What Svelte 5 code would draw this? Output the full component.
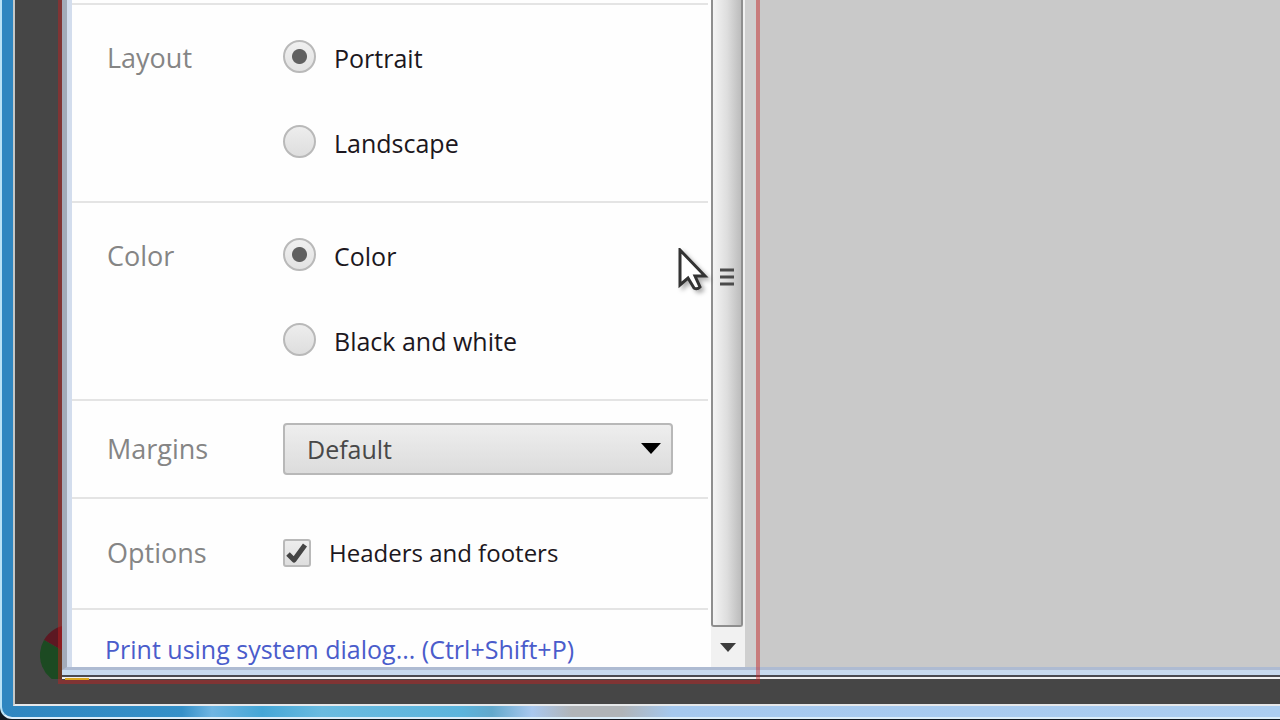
<script lang="ts">
  type Choice = { value: string; label: string };
  type Group = { name: string; title: string; choices: Choice[] };

  const groups: Group[] = [
    {
      name: "layout",
      title: "Layout",
      choices: [
        { value: "portrait", label: "Portrait" },
        { value: "landscape", label: "Landscape" },
      ],
    },
    {
      name: "color",
      title: "Color",
      choices: [
        { value: "color", label: "Color" },
        { value: "bw", label: "Black and white" },
      ],
    },
  ];

  let selected: Record<string, string> = $state({
    layout: "portrait",
    color: "color",
  });
  let margins = $state("default");
  let headers = $state(true);
</script>

<div class="desktop">
  <div class="window">
    <svg class="logo" viewBox="0 0 60 54" aria-hidden="true">
      <path d="M30 30 4 15A30 30 0 0 1 56 15Z" fill="#5c1822" />
      <path d="M30 30 4 15A30 30 0 0 0 22 59Z" fill="#1c4a22" />
    </svg>

    <div class="dialog">
      <div class="sidebar">
        <form class="settings">
          <div class="previous"></div>

          {#each groups as group (group.name)}
            <div class="row" role="radiogroup" aria-labelledby={group.name}>
              <span class="title" id={group.name}>{group.title}</span>
              <div class="choices">
                {#each group.choices as choice (choice.value)}
                  <label class="choice">
                    <input
                      type="radio"
                      name={group.name}
                      value={choice.value}
                      bind:group={selected[group.name]}
                    />
                    {choice.label}
                  </label>
                {/each}
              </div>
            </div>
          {/each}

          <div class="row margins">
            <label class="title" for="margins">Margins</label>
            <div class="dropdown">
              <select id="margins" bind:value={margins}>
                <option value="default">Default</option>
                <option value="none">None</option>
                <option value="minimum">Minimum</option>
              </select>
              <svg class="arrow" viewBox="0 0 20 11" aria-hidden="true">
                <path d="M0 0H20L10 11Z" />
              </svg>
            </div>
          </div>

          <div class="row options">
            <span class="title">Options</span>
            <label class="choice">
              <span class="check">
                <input type="checkbox" bind:checked={headers} />
                {#if headers}
                  <svg viewBox="0 0 28 28" aria-hidden="true">
                    <path d="M5 15 11 21 22 6" />
                  </svg>
                {/if}
              </span>
              Headers and footers
            </label>
          </div>

          <a class="system" href="#system">Print using system dialog... (Ctrl+Shift+P)</a>
        </form>

        <div class="scrollbar">
          <div class="thumb">
            <svg viewBox="0 0 14 18" aria-hidden="true">
              <path d="M0 2H14M0 9H14M0 16H14" />
            </svg>
          </div>
          <button type="button" aria-label="Scroll down">
            <svg viewBox="0 0 16 9" aria-hidden="true">
              <path d="M0 0H16L8 9Z" />
            </svg>
          </button>
        </div>

        <div class="highlight"></div>

        <svg class="cursor" viewBox="0 0 36 50" aria-hidden="true">
          <path d="M2 2V37L10 30L16 40Q19 42 22 39L17 28H27Z" />
        </svg>
      </div>
      <div class="preview"></div>
    </div>
  </div>
</div>

<style>
  :global(body) {
    margin: 0;
    background: #101820;
  }

  .desktop {
    box-sizing: border-box;
    display: flex;
    min-height: 100vh;
    padding-bottom: 2px;
    overflow: hidden;
    background: #101820;
    font-family: "Open Sans", "Noto Sans", sans-serif;
    font-size: 25px;
    line-height: 36px;
    color: #1c1720;
  }

  .window {
    position: relative;
    flex: 1;
    display: flex;
    padding: 0 0 11px 11px;
    border-left: 2px solid #b9e2f6;
    border-bottom: 2px solid #dceefa;
    border-bottom-left-radius: 12px;
    background:
      linear-gradient(
          90deg,
          #2f86c0 0,
          #3590c8 180px,
          #6fb5e2 210px,
          #45a6d6 260px,
          #6abbe0 320px,
          #5cb4dc 460px,
          #62a8cc 490px,
          #a9c8ee 530px,
          #b0b4b8 570px,
          #b0b4b8 620px,
          #a5c8ee 670px,
          #abcdf0 100%
        )
        bottom / 100% 11px no-repeat,
      #2f86c0;
  }

  .dialog {
    flex: 1;
    display: flex;
    padding-left: 47px;
    padding-bottom: 34px;
    border-left: 2px solid #c4c8c8;
    border-bottom: 2px solid #e6e8ea;
    background: #464646;
  }

  .logo {
    position: absolute;
    left: 38px;
    bottom: 38px;
    width: 60px;
    height: 54px;
  }

  .sidebar {
    position: relative;
    z-index: 1;
    display: flex;
    border-left: 5px solid #a3abb9;
    border-bottom: 3px solid #aebbd2;
    background: #cfcfcf;
    box-shadow:
      0 5px #c8daee,
      0 7px #4a4a50,
      0 9px #f0f0f0;
  }

  .settings {
    box-sizing: border-box;
    width: calc(50vw + 4px);
    border-left: 5px solid #d3dded;
    background: #fefefe;
  }

  .previous {
    height: 3px;
    margin-right: 3px;
    border-bottom: 2px solid #e4e4e4;
  }

  .row {
    display: flex;
    align-items: flex-start;
    margin-right: 3px;
    padding: 35px 35px 40px;
    border-bottom: 2px solid #e4e4e4;
  }

  .title {
    flex: none;
    width: 176px;
    font-size: 27px;
    color: #858585;
  }

  .choices {
    display: flex;
    flex-direction: column;
    gap: 49px;
  }

  .choice {
    display: flex;
    align-items: center;
    gap: 18px;
  }

  input {
    appearance: none;
    box-sizing: border-box;
    flex: none;
    margin: 0;
    border: 2px solid #b9b9b9;
    background: linear-gradient(#ededed, #dedede);
  }

  input[type="radio"] {
    width: 33px;
    height: 33px;
    margin-bottom: 3px;
    border-radius: 50%;
  }

  input[type="radio"]:checked {
    background:
      radial-gradient(circle, #606060 7px, transparent 8px),
      linear-gradient(#f0f0f0, #e2e2e2);
  }

  .margins {
    align-items: center;
    padding-top: 22px;
    padding-bottom: 22px;
  }

  .dropdown {
    position: relative;
    flex: 1;
  }

  select {
    appearance: none;
    display: block;
    width: 100%;
    height: 52px;
    padding: 0 22px;
    border: 2px solid #b8b8b8;
    border-radius: 4px;
    background: linear-gradient(#eeeeee, #dcdcdc);
    font: inherit;
    color: #484848;
  }

  .arrow {
    position: absolute;
    top: 20px;
    right: 12px;
    width: 20px;
    height: 11px;
    pointer-events: none;
  }

  .options {
    padding-top: 36px;
    padding-bottom: 37px;
  }

  .options .choice {
    font-size: 24px;
  }

  .check {
    position: relative;
    width: 28px;
    height: 28px;
  }

  .check input {
    display: block;
    width: 28px;
    height: 28px;
    border-radius: 3px;
  }

  .check svg {
    position: absolute;
    inset: 0;
    fill: none;
    stroke: #444444;
    stroke-width: 5;
    stroke-linejoin: round;
    pointer-events: none;
  }

  .system {
    display: block;
    padding: 21px 0 0 33px;
    color: #4a5ccb;
    text-decoration: none;
  }

  .scrollbar {
    display: flex;
    flex-direction: column;
    width: 34px;
    margin-right: 11px;
    background: #f1f1f1;
  }

  .thumb {
    flex: 1;
    margin-right: 2px;
    border: 2px solid #8e8e8e;
    border-top: 0;
    border-radius: 0 0 3px 3px;
    background: linear-gradient(90deg, #f4f4f4, #dedede 50%, #bcbcbc);
  }

  .thumb svg {
    display: block;
    width: 14px;
    height: 18px;
    margin: 268px auto 0;
    stroke: #4b4b4b;
    stroke-width: 3;
  }

  button {
    display: flex;
    align-items: center;
    justify-content: center;
    height: 40px;
    padding: 0;
    border: 0;
    background: none;
  }

  button svg {
    width: 16px;
    height: 9px;
    fill: #3c3c3c;
  }

  .highlight {
    position: absolute;
    inset: 0 -4px -17px -9px;
    border: 4px solid rgba(200, 30, 30, 0.45);
    border-top: 0;
    pointer-events: none;
  }

  /* lower rim of the logo, seen between the dialog and the outline */
  .highlight::before {
    content: "";
    position: absolute;
    bottom: 0;
    left: 3px;
    width: 24px;
    height: 2px;
    background: #d9a51c;
  }

  .cursor {
    position: absolute;
    top: 248px;
    right: 42px;
    width: 36px;
    height: 50px;
    fill: #ffffff;
    stroke: #333333;
    stroke-width: 3;
    filter: drop-shadow(3px 3px 2px rgba(0, 0, 0, 0.3));
    pointer-events: none;
  }

  .preview {
    flex: 1;
    border-bottom: 3px solid #aebbd2;
    background: #c9c9c9;
    box-shadow:
      0 5px #c8daee,
      0 7px #4a4a50,
      0 9px #f0f0f0;
  }
</style>
